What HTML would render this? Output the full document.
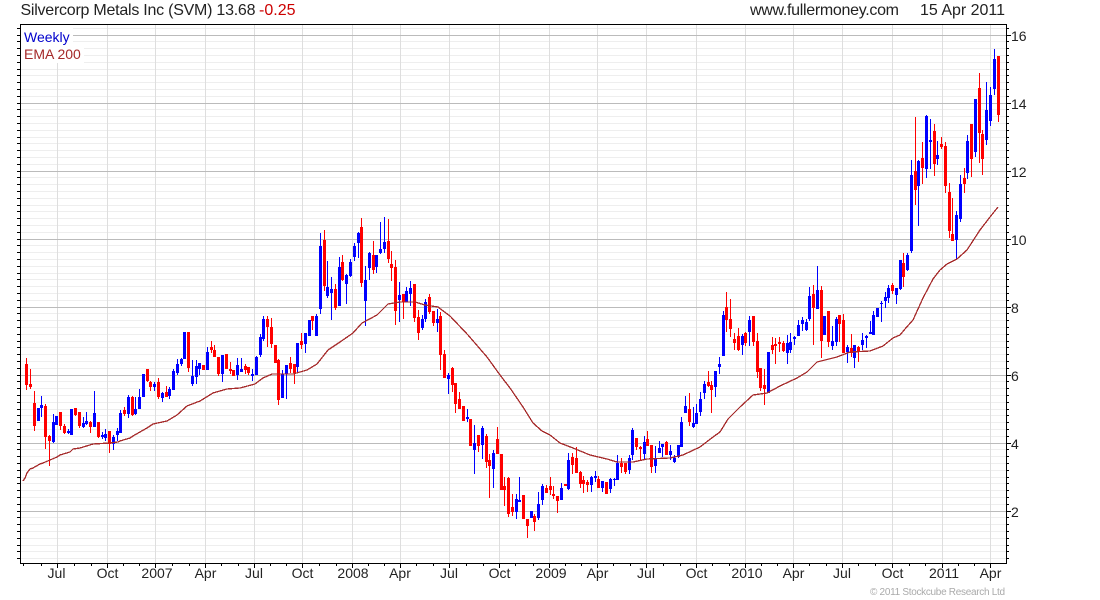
<!DOCTYPE html>
<html><head><meta charset="utf-8"><title>Silvercorp Metals Inc (SVM)</title>
<style>
html,body{margin:0;padding:0;background:#fff;width:1100px;height:600px;overflow:hidden}
svg{display:block}
text{font-family:"Liberation Sans",Arial,sans-serif}
.c{shape-rendering:crispEdges;fill:none}
</style></head><body>
<svg width="1100" height="600" viewBox="0 0 1100 600">
<rect width="1100" height="600" fill="#fff"/>
<path class="c" stroke="#eee" d="M21 28.5h985M21 41.5h985M21 48.5h985M21 55.5h985M21 62.5h985M21 69.5h985M21 75.5h985M21 82.5h985M21 89.5h985M21 96.5h985M21 109.5h985M21 116.5h985M21 123.5h985M21 130.5h985M21 137.5h985M21 143.5h985M21 150.5h985M21 157.5h985M21 164.5h985M21 177.5h985M21 184.5h985M21 191.5h985M21 198.5h985M21 205.5h985M21 211.5h985M21 218.5h985M21 225.5h985M21 232.5h985M21 245.5h985M21 252.5h985M21 259.5h985M21 266.5h985M21 273.5h985M21 279.5h985M21 286.5h985M21 293.5h985M21 300.5h985M21 313.5h985M21 320.5h985M21 327.5h985M21 334.5h985M21 341.5h985M21 347.5h985M21 354.5h985M21 361.5h985M21 368.5h985M21 381.5h985M21 388.5h985M21 395.5h985M21 402.5h985M21 409.5h985M21 415.5h985M21 422.5h985M21 429.5h985M21 436.5h985M21 449.5h985M21 456.5h985M21 463.5h985M21 470.5h985M21 477.5h985M21 483.5h985M21 490.5h985M21 497.5h985M21 504.5h985M21 517.5h985M21 524.5h985M21 531.5h985M21 538.5h985M21 545.5h985M21 551.5h985M21 558.5h985"/>
<path class="c" stroke="#dedede" d="M57.5 25V563M107.5 25V563M155.5 25V563M205.5 25V563M254.5 25V563M302.5 25V563M352.5 25V563M400.5 25V563M449.5 25V563M499.5 25V563M549.5 25V563M597.5 25V563M646.5 25V563M696.5 25V563M745.5 25V563M793.5 25V563M842.5 25V563M892.5 25V563M942.5 25V563M990.5 25V563"/>
<path class="c" stroke="#bbb" d="M21 35.5h985M21 103.5h985M21 171.5h985M21 239.5h985M21 307.5h985M21 375.5h985M21 443.5h985M21 511.5h985"/>
<rect x="21" y="25" width="52" height="20" fill="#fff"/>
<rect x="21" y="45" width="63" height="18" fill="#fff"/>

<path class="c" stroke="#00f" stroke-width="1" d="M38.5 408V421M41.5 396V417M53.5 414V443M56.5 416V425M68.5 429V434M71.5 409V435M83.5 417V428M86.5 412V425M94.5 391V427M102.5 432V439M105.5 429V441M113.5 435V450M117.5 428V441M120.5 410V433M128.5 395V418M135.5 397V415M139.5 389V409M143.5 374V397M154.5 382V391M162.5 392V402M169.5 387V399M173.5 369V390M177.5 359V375M181.5 358V366M184.5 332V359M192.5 360V386M196.5 360V384M199.5 363V375M207.5 347V370M222.5 355V382M237.5 358V380M241.5 358V372M252.5 369V381M256.5 356V375M260.5 334V357M263.5 316V341M282.5 370V398M286.5 365V399M297.5 343V372M305.5 333V353M309.5 320V336M316.5 314V336M320.5 233V314M327.5 261V298M331.5 277V320M339.5 257V306M346.5 274V304M350.5 259V277M354.5 243V261M358.5 232V258M365.5 266V326M369.5 252V280M376.5 255V273M380.5 222V254M384.5 217V253M399.5 282V322M406.5 287V302M410.5 281V306M422.5 315V330M425.5 299V322M437.5 309V332M448.5 373V394M467.5 409V422M474.5 425V474M482.5 426V459M493.5 450V488M516.5 494V519M519.5 477V502M531.5 511V518M538.5 492V520M542.5 484V505M561.5 483V500M568.5 453V490M591.5 476V492M595.5 471V482M602.5 481V492M610.5 478V493M614.5 478V486M617.5 455V480M629.5 455V474M632.5 428V460M644.5 436V460M655.5 446V473M659.5 441V453M662.5 444V457M670.5 445V460M674.5 455V463M678.5 445V458M681.5 417V447M685.5 396V413M693.5 407V428M696.5 404V424M700.5 392V416M704.5 381V399M715.5 371V397M719.5 357V374M723.5 311V356M742.5 334V355M749.5 316V346M768.5 352V393M787.5 335V364M790.5 333V353M794.5 336V345M798.5 320V336M802.5 317V331M806.5 319V331M809.5 287V321M817.5 266V309M824.5 316V335M832.5 326V350M836.5 317V346M847.5 345V363M854.5 345V368M862.5 333V350M866.5 335V348M870.5 321V334M873.5 311V335M877.5 308V317M881.5 301V322M885.5 292V308M888.5 285V303M896.5 288V304M900.5 260V290M907.5 253V271M911.5 160V253M918.5 160V226M926.5 115V178M930.5 119V169M937.5 141V165M956.5 211V260M960.5 175V222M967.5 135V179M975.5 99V157M986.5 82V145M990.5 87V126M994.5 49V95"/>
<path class="c" stroke="#00f" stroke-width="3" d="M38.5 408V421M41.5 405V408M53.5 422V442M56.5 416V425M68.5 431V433M71.5 409V435M83.5 423V427M86.5 421V424M94.5 413V427M102.5 435V437M105.5 434V438M113.5 437V444M117.5 431V435M120.5 413V433M128.5 397V414M135.5 409V414M139.5 397V409M143.5 374V397M154.5 384V387M162.5 393V398M169.5 389V396M173.5 371V390M177.5 364V373M181.5 359V364M184.5 332V359M192.5 376V384M196.5 366V377M199.5 363V369M207.5 352V370M222.5 355V374M237.5 365V375M241.5 369V372M252.5 374V376M256.5 357V375M260.5 337V355M263.5 319V339M282.5 374V398M286.5 365V374M297.5 343V367M305.5 333V344M309.5 320V336M316.5 316V336M320.5 246V309M327.5 287V296M331.5 289V293M339.5 267V306M346.5 275V284M350.5 262V276M354.5 246V257M358.5 233V243M365.5 280V301M369.5 253V268M376.5 255V267M380.5 249V253M384.5 242V249M399.5 295V300M406.5 291V302M410.5 288V294M422.5 319V328M425.5 302V319M437.5 319V323M448.5 375V379M467.5 417V419M474.5 443V450M482.5 428V445M493.5 453V469M516.5 499V512M519.5 500V502M531.5 511V518M538.5 504V518M542.5 486V500M561.5 488V500M568.5 460V489M591.5 477V485M595.5 476V478M602.5 481V488M610.5 479V489M614.5 479V480M617.5 463V480M629.5 458V470M632.5 430V455M644.5 442V454M655.5 458V466M659.5 448V453M662.5 444V447M670.5 451V455M674.5 458V462M678.5 445V457M681.5 422V447M685.5 406V413M693.5 423V427M696.5 413V424M700.5 399V412M704.5 384V393M715.5 371V387M719.5 364V367M723.5 315V356M742.5 336V345M749.5 320V332M768.5 352V393M787.5 343V353M790.5 342V350M794.5 337V339M798.5 325V336M802.5 320V324M806.5 322V330M809.5 296V319M817.5 290V309M824.5 316V335M832.5 341V346M836.5 319V342M847.5 347V352M854.5 345V358M862.5 340V345M866.5 336V338M870.5 332V334M873.5 315V335M877.5 308V317M881.5 303V304M885.5 297V301M888.5 288V298M896.5 288V295M900.5 260V289M907.5 255V270M911.5 175V251M918.5 161V186M926.5 116V169M930.5 140V142M937.5 155V159M956.5 215V240M960.5 184V219M967.5 141V173M975.5 99V152M986.5 110V140M990.5 95V121M994.5 59V89"/>
<path class="c" stroke="#f00" stroke-width="1" d="M26.5 358V390M30.5 369V389M34.5 391V431M45.5 404V449M49.5 435V466M60.5 412V430M64.5 424V434M75.5 408V416M79.5 412V428M90.5 421V433M98.5 422V438M109.5 431V453M124.5 407V416M132.5 396V416M147.5 369V382M150.5 381V391M158.5 378V399M166.5 386V397M188.5 332V372M203.5 365V370M211.5 341V353M214.5 345V357M218.5 357V376M226.5 354V369M230.5 362V374M233.5 370V376M245.5 364V374M248.5 367V375M267.5 316V347M271.5 318V348M275.5 345V363M278.5 359V405M290.5 357V373M294.5 364V384M301.5 333V349M312.5 316V330M324.5 230V291M335.5 284V310M342.5 255V281M361.5 218V287M373.5 241V274M388.5 219V263M391.5 251V281M395.5 260V325M403.5 294V319M414.5 284V322M418.5 310V340M429.5 294V314M433.5 311V326M440.5 312V370M444.5 350V378M452.5 367V392M455.5 383V413M459.5 392V409M463.5 406V421M470.5 419V446M478.5 435V452M486.5 434V468M489.5 454V498M497.5 427V454M501.5 454V490M504.5 477V506M508.5 477V517M512.5 494V516M523.5 495V519M527.5 519V538M534.5 514V531M546.5 485V493M550.5 477V495M553.5 486V499M557.5 496V513M565.5 484V486M572.5 453V474M576.5 447V473M580.5 471V488M583.5 476V493M587.5 480V492M598.5 476V488M606.5 482V494M621.5 458V473M625.5 463V474M636.5 438V450M640.5 446V461M647.5 431V446M651.5 445V473M666.5 441V455M689.5 393V426M708.5 371V387M711.5 381V413M726.5 292V332M730.5 299V337M734.5 333V350M738.5 328V351M745.5 332V346M753.5 316V346M757.5 333V378M760.5 368V391M764.5 369V405M772.5 337V354M775.5 338V364M779.5 337V352M783.5 341V352M813.5 285V345M821.5 286V358M828.5 311V347M839.5 315V342M843.5 314V353M851.5 334V357M858.5 346V362M892.5 283V294M903.5 253V287M915.5 117V205M922.5 142V184M934.5 124V176M941.5 137V149M945.5 142V193M949.5 183V238M952.5 198V241M964.5 168V193M971.5 124V177M979.5 73V163M982.5 130V175M998.5 56V122"/>
<path class="c" stroke="#f00" stroke-width="3" d="M26.5 364V385M30.5 384V387M34.5 403V426M45.5 406V437M49.5 436V441M60.5 412V426M64.5 426V433M75.5 408V415M79.5 412V426M90.5 422V427M98.5 422V437M109.5 431V444M124.5 410V414M132.5 397V415M147.5 369V381M150.5 382V387M158.5 382V397M166.5 392V397M188.5 332V368M203.5 365V370M211.5 347V350M214.5 350V357M218.5 357V374M226.5 354V369M230.5 369V371M233.5 370V376M245.5 366V370M248.5 367V373M267.5 319V327M271.5 327V344M275.5 345V363M278.5 360V400M290.5 363V369M294.5 364V373M301.5 341V345M312.5 316V321M324.5 240V286M335.5 289V308M342.5 262V280M361.5 227V283M373.5 255V270M388.5 241V259M391.5 264V268M395.5 267V311M403.5 294V302M414.5 284V318M418.5 317V333M429.5 297V312M433.5 311V323M440.5 316V355M444.5 354V378M452.5 368V385M455.5 383V404M459.5 399V409M463.5 406V421M470.5 419V446M478.5 435V446M486.5 436V462M489.5 460V466M497.5 439V454M501.5 454V490M504.5 486V490M508.5 478V514M512.5 507V512M523.5 495V519M527.5 519V526M534.5 516V522M546.5 488V493M550.5 486V490M553.5 494V496M557.5 496V501M565.5 484V486M572.5 457V465M576.5 458V473M580.5 472V484M583.5 480V484M587.5 482V485M598.5 479V488M606.5 482V494M621.5 463V467M625.5 463V472M636.5 438V447M640.5 447V449M647.5 439V446M651.5 445V467M666.5 442V455M689.5 409V422M708.5 382V386M711.5 385V390M726.5 307V320M730.5 319V329M734.5 339V343M738.5 336V350M745.5 333V343M753.5 316V342M757.5 341V372M760.5 368V388M764.5 385V389M772.5 345V350M775.5 344V346M779.5 342V344M783.5 343V351M813.5 294V308M821.5 290V341M828.5 311V342M839.5 315V324M843.5 320V353M851.5 348V353M858.5 347V352M892.5 285V291M903.5 263V277M915.5 171V190M922.5 158V168M934.5 131V164M941.5 144V147M945.5 146V186M949.5 192V231M952.5 234V241M964.5 178V184M971.5 124V159M979.5 88V133M982.5 134V159M998.5 56V115"/>

<polyline class="c" stroke="#a52a2a" stroke-width="1.3" points="23,481 25,478 27,473 30,469 33,468 40,464 43,463 50,460 57,457 60,455 70,452 73,449 80,448 93,444 110,443 118,442 120,441 130,438 133,436 147,428 153,424 167,421 177,415 187,406 200,401 213,393 227,389 240,388 255,384 263,378 272,374 293,374 300,372 307,370 317,364 328,350 340,342 353,333 362,323 377,315 388,304 400,302 415,302 425,305 438,307 450,316 468,335 487,357 500,375 510,388 523,407 533,423 542,431 550,435 560,443 573,448 590,455 607,459 617,462 633,462 647,459 670,458 683,455 700,447 713,437 720,432 728,419 740,407 753,395 767,393 780,386 797,378 807,372 817,362 837,357 850,352 870,351 883,346 893,338 900,335 905,329 913,320 923,298 933,279 940,270 947,264 957,259 967,250 980,230 990,217 998,207"/>

<path class="c" stroke="#000" d="M20.5 24.5H1006.5V563.5H20.5Z"/>
<path class="c" stroke="#000" d="M17 28.5h3M17 35.5h3M17 41.5h3M17 48.5h3M17 55.5h3M17 62.5h3M17 69.5h3M17 75.5h3M17 82.5h3M17 89.5h3M17 96.5h3M17 103.5h3M17 109.5h3M17 116.5h3M17 123.5h3M17 130.5h3M17 137.5h3M17 143.5h3M17 150.5h3M17 157.5h3M17 164.5h3M17 171.5h3M17 177.5h3M17 184.5h3M17 191.5h3M17 198.5h3M17 205.5h3M17 211.5h3M17 218.5h3M17 225.5h3M17 232.5h3M17 239.5h3M17 245.5h3M17 252.5h3M17 259.5h3M17 266.5h3M17 273.5h3M17 279.5h3M17 286.5h3M17 293.5h3M17 300.5h3M17 307.5h3M17 313.5h3M17 320.5h3M17 327.5h3M17 334.5h3M17 341.5h3M17 347.5h3M17 354.5h3M17 361.5h3M17 368.5h3M17 375.5h3M17 381.5h3M17 388.5h3M17 395.5h3M17 402.5h3M17 409.5h3M17 415.5h3M17 422.5h3M17 429.5h3M17 436.5h3M17 443.5h3M17 449.5h3M17 456.5h3M17 463.5h3M17 470.5h3M17 477.5h3M17 483.5h3M17 490.5h3M17 497.5h3M17 504.5h3M17 511.5h3M17 517.5h3M17 524.5h3M17 531.5h3M17 538.5h3M17 545.5h3M17 551.5h3M17 558.5h3"/>
<path class="c" stroke="#000" d="M1007 28.5h2M1007 35.5h4M1007 41.5h2M1007 48.5h2M1007 55.5h2M1007 62.5h2M1007 69.5h2M1007 75.5h2M1007 82.5h2M1007 89.5h2M1007 96.5h2M1007 103.5h4M1007 109.5h2M1007 116.5h2M1007 123.5h2M1007 130.5h2M1007 137.5h2M1007 143.5h2M1007 150.5h2M1007 157.5h2M1007 164.5h2M1007 171.5h4M1007 177.5h2M1007 184.5h2M1007 191.5h2M1007 198.5h2M1007 205.5h2M1007 211.5h2M1007 218.5h2M1007 225.5h2M1007 232.5h2M1007 239.5h4M1007 245.5h2M1007 252.5h2M1007 259.5h2M1007 266.5h2M1007 273.5h2M1007 279.5h2M1007 286.5h2M1007 293.5h2M1007 300.5h2M1007 307.5h4M1007 313.5h2M1007 320.5h2M1007 327.5h2M1007 334.5h2M1007 341.5h2M1007 347.5h2M1007 354.5h2M1007 361.5h2M1007 368.5h2M1007 375.5h4M1007 381.5h2M1007 388.5h2M1007 395.5h2M1007 402.5h2M1007 409.5h2M1007 415.5h2M1007 422.5h2M1007 429.5h2M1007 436.5h2M1007 443.5h4M1007 449.5h2M1007 456.5h2M1007 463.5h2M1007 470.5h2M1007 477.5h2M1007 483.5h2M1007 490.5h2M1007 497.5h2M1007 504.5h2M1007 511.5h4M1007 517.5h2M1007 524.5h2M1007 531.5h2M1007 538.5h2M1007 545.5h2M1007 551.5h2M1007 558.5h2"/>
<path class="c" stroke="#000" d="M57.5 564v4M107.5 564v4M155.5 564v4M205.5 564v4M254.5 564v4M302.5 564v4M352.5 564v4M400.5 564v4M449.5 564v4M499.5 564v4M549.5 564v4M597.5 564v4M646.5 564v4M696.5 564v4M745.5 564v4M793.5 564v4M842.5 564v4M892.5 564v4M942.5 564v4M990.5 564v4M23.5 564v2M41.5 564v2M74.5 564v2M91.5 564v2M123.5 564v2M139.5 564v2M172.5 564v2M189.5 564v2M221.5 564v2M238.5 564v2M270.5 564v2M286.5 564v2M319.5 564v2M336.5 564v2M368.5 564v2M384.5 564v2M416.5 564v2M433.5 564v2M466.5 564v2M483.5 564v2M515.5 564v2M533.5 564v2M565.5 564v2M581.5 564v2M613.5 564v2M630.5 564v2M663.5 564v2M680.5 564v2M712.5 564v2M729.5 564v2M761.5 564v2M777.5 564v2M809.5 564v2M826.5 564v2M858.5 564v2M875.5 564v2M909.5 564v2M925.5 564v2M958.5 564v2M974.5 564v2"/>

<text x="20.5" y="15" font-size="16" fill="#222" textLength="235" lengthAdjust="spacing">Silvercorp Metals Inc (SVM) 13.68</text>
<text x="259" y="15" font-size="16" fill="#c00" textLength="36.5" lengthAdjust="spacing">-0.25</text>
<text x="750" y="15" font-size="16" fill="#222" textLength="149" lengthAdjust="spacing">www.fullermoney.com</text>
<text x="920" y="15" font-size="16" fill="#222" textLength="85" lengthAdjust="spacing">15 Apr 2011</text>
<text x="24" y="42" font-size="14" fill="#00c">Weekly</text>
<text x="24" y="59" font-size="14" fill="#a52a2a">EMA 200</text>

<g font-size="14" fill="#222">
<text x="1011" y="41">16</text><text x="1011" y="109">14</text><text x="1011" y="177">12</text><text x="1011" y="245">10</text>
<text x="1011" y="313">8</text><text x="1011" y="381">6</text><text x="1011" y="449">4</text><text x="1011" y="517">2</text>
</g>
<g font-size="14" fill="#222" text-anchor="middle">
<text x="56.5" y="578">Jul</text><text x="107.5" y="578">Oct</text><text x="157" y="578">2007</text><text x="205.5" y="578">Apr</text><text x="254" y="578">Jul</text><text x="302.5" y="578">Oct</text><text x="353" y="578">2008</text><text x="400" y="578">Apr</text><text x="449" y="578">Jul</text><text x="499.5" y="578">Oct</text><text x="551" y="578">2009</text><text x="597.5" y="578">Apr</text><text x="646" y="578">Jul</text><text x="696.5" y="578">Oct</text><text x="747" y="578">2010</text><text x="793.5" y="578">Apr</text><text x="842" y="578">Jul</text><text x="892.5" y="578">Oct</text><text x="944" y="578">2011</text><text x="990.5" y="578">Apr</text>
</g>
<text x="870" y="595" font-size="10" fill="#aaa" textLength="135" lengthAdjust="spacing">© 2011 Stockcube Research Ltd</text>
</svg>
</body></html>
